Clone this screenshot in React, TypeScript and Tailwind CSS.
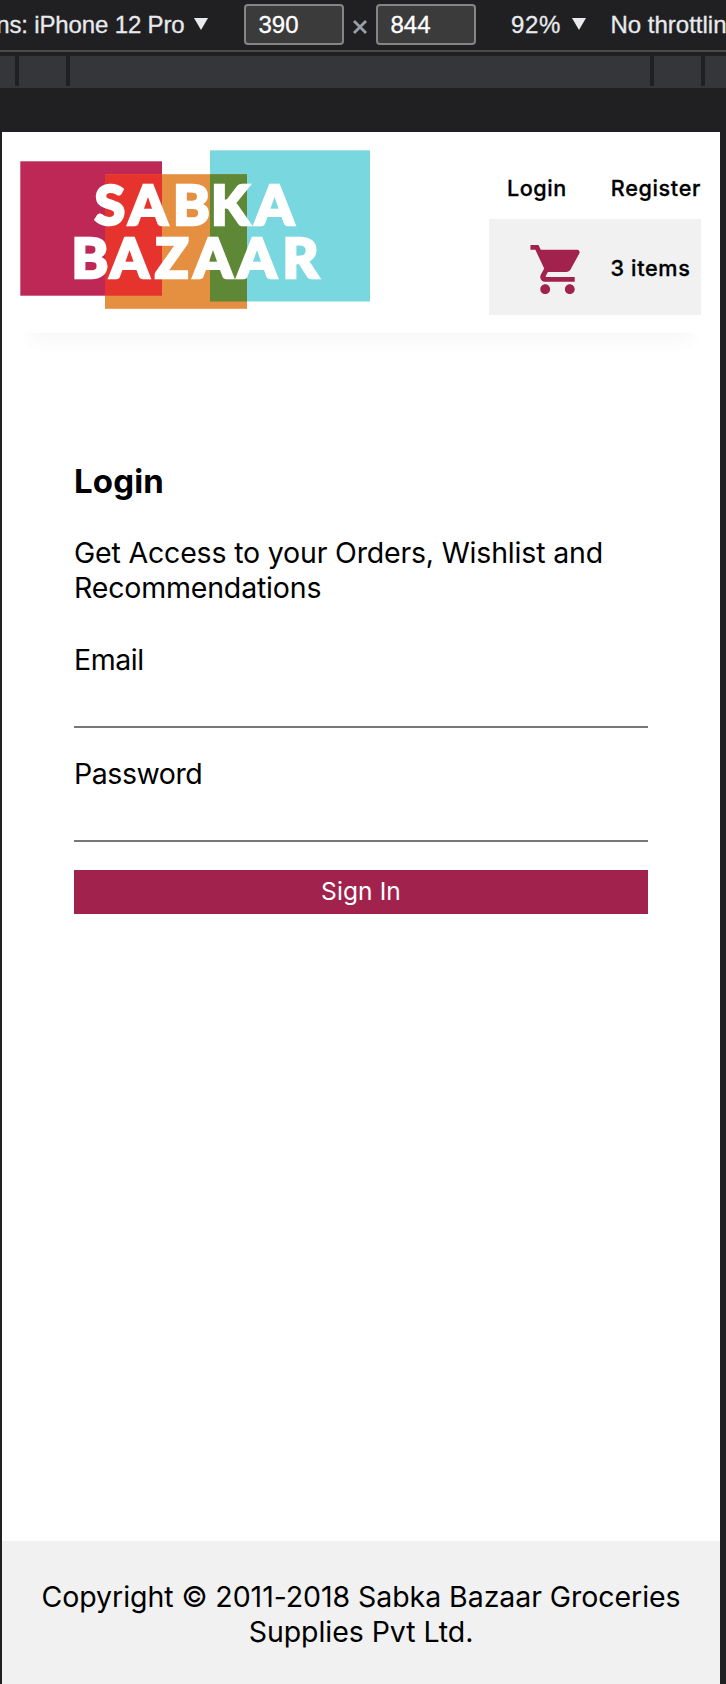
import { MdShoppingCart } from "react-icons/md";

function Caret({ className }: { className: string }) {
  return (
    <svg viewBox="0 0 14 12" className={`h-3 w-3.5 shrink-0 ${className}`}>
      <path d="M0 0H14L7 12Z" fill="#e8eaed" />
    </svg>
  );
}

function SizeField({ value }: { value: string }) {
  return (
    <div className="h-[41px] w-[100px] shrink-0 rounded-[4px] border-2 border-[#858585] bg-[#3b3b3b] pl-[12.5px] text-[24px] leading-[37px] text-white [-webkit-text-stroke:0.3px_white]">
      {value}
    </div>
  );
}

function DeviceToolbar() {
  return (
    <div className="flex h-[52px] items-start overflow-hidden border-b-2 border-[#4a4b4d] pt-1 font-['Liberation_Sans',sans-serif] text-[24px] leading-[41px] whitespace-pre text-[#e8eaed] [-webkit-text-stroke:0.3px_#e8eaed]">
      <div className="flex w-[244px] shrink-0 items-center">
        <span className="flex w-[184.5px] shrink-0 justify-end tracking-[-0.15px]">ns: iPhone 12 Pro</span>
        <Caret className="ml-[9.5px] -mt-px" />
      </div>
      <SizeField value="390" />
      <div className="flex h-[45px] w-[32px] shrink-0 items-center justify-center">
        <svg viewBox="0 0 14 14" className="size-3.5">
          <path d="M1 1L13 13M13 1L1 13" stroke="#9aa0a6" strokeWidth="2.8" />
        </svg>
      </div>
      <SizeField value="844" />
      <div className="ml-[35px] flex w-[99.5px] shrink-0 items-center">
        <span className="w-[61px] tracking-[0.6px]">92%</span>
        <Caret className="-mt-px" />
      </div>
      <span className="shrink-0">No throttling</span>
    </div>
  );
}

function Ruler() {
  return (
    <div className="mt-1 flex h-8 bg-[#35363a]">
      <div className="h-[30px] w-[19px] border-r-4 border-[#202022]" />
      <div className="h-[30px] w-[51px] border-r-4 border-[#202022]" />
      <div className="h-[30px] w-[584px] border-r-4 border-[#202022]" />
      <div className="h-[30px] w-[51px] border-r-4 border-[#202022]" />
    </div>
  );
}

function Logo() {
  return (
    <svg viewBox="20 150 350 159" className="h-[159px] w-[350px] shrink-0">
      <rect x="20.3" y="161.3" width="141.7" height="134.4" fill="#be2856" />
      <rect x="210" y="150.3" width="160" height="151.2" fill="#79d7e0" />
      <rect x="105" y="174.2" width="142" height="134.6" fill="#e58f40" />
      <rect x="105" y="174.2" width="57" height="121.5" fill="#e6332d" />
      <rect x="210" y="174.2" width="37" height="127.3" fill="#5e8736" />
      <g fill="#fff" stroke="#fff" strokeWidth="2.6" fontFamily="Lato, sans-serif" fontWeight="900" fontSize="55.5">
        <text x="94.5 128.5 173 211 255" y="225">SABKA</text>
        <text x="71.5 110 155 193.5 237.5 282.5" y="278">BAZAAR</text>
      </g>
    </svg>
  );
}

function Header() {
  return (
    <header className="mr-[19px] ml-[18px] flex h-[201px] justify-between pt-[18px] shadow-[0_20px_16px_-10px_rgba(0,0,0,0.03)]">
      <Logo />
      <div className="w-[212px] text-[21.6px] leading-[30px] font-medium [-webkit-text-stroke:0.3px_black]">
        <nav className="mt-[23px] flex h-[46px]">
          <a className="w-[122px] pl-[18px] tracking-[0.55px]">Login</a>
          <a className="tracking-[0.65px] whitespace-nowrap">Register</a>
        </nav>
        <div className="flex h-24 items-center bg-[#f1f1f1] pl-[38.5px]">
          <MdShoppingCart className="mt-1 size-[59px] text-[#a1224c]" />
          <span className="mt-0.5 ml-6 tracking-[0.65px] whitespace-nowrap">3 items</span>
        </div>
      </div>
    </header>
  );
}

function Field({ label, type }: { label: string; type: string }) {
  return (
    <label className="block h-[114px]">
      <span className="block h-[35px] tracking-[-0.45px]">{label}</span>
      <input type={type} className="block h-[51px] w-full border-b-2 border-[#777] bg-transparent outline-none" />
    </label>
  );
}

function LoginForm() {
  return (
    <main className="mt-32 h-[1080px] pr-[72px] pl-[72px] text-[28.5px] leading-[35px]">
      <h1 className="text-[33px] leading-10 font-bold tracking-[0.15px]">Login</h1>
      <p className="mt-[34px] tracking-[-0.18px]">
        Get Access to your Orders, Wishlist and
        <br />
        Recommendations
      </p>
      <form className="mt-[37px]">
        <Field label="Email" type="email" />
        <Field label="Password" type="password" />
        <button type="button" className="block h-11 w-full bg-[#a1224c] pb-0.5 text-[24.5px] leading-[42px] tracking-[0.1px] text-white">
          Sign In
        </button>
      </form>
    </main>
  );
}

export default function App() {
  return (
    <div className="h-[1684px] w-[726px] overflow-hidden bg-[#202022]">
      <DeviceToolbar />
      <Ruler />
      <div className="mt-11 ml-0.5 h-[1552px] w-[718px] bg-white font-[Inter,sans-serif] text-black">
        <Header />
        <LoginForm />
        <footer className="h-[143px] bg-[#f1f1f1] pt-[38px] text-center text-[28.5px] leading-[35px] tracking-[-0.06px]">
          Copyright © 2011-2018 Sabka Bazaar Groceries
          <br />
          Supplies Pvt Ltd.
        </footer>
      </div>
    </div>
  );
}
